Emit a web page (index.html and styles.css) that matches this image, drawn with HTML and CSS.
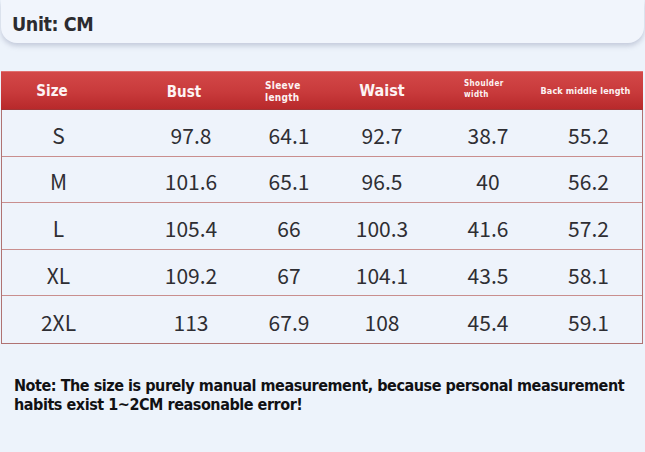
FILE: index.html
```html
<!DOCTYPE html>
<html>
<head>
<meta charset="utf-8">
<link rel="stylesheet" href="styles.css">
</head>
<body>
<div class="page">
  <div class="unit-card"><span class="unit">Unit: CM</span></div>
  <div class="table">
    <div class="row head">
      <div class="c c1 h-size">Size</div>
      <div class="c c2 h-bust">Bust</div>
      <div class="c c3 h-sleeve">Sleeve<br>length</div>
      <div class="c c4 h-waist">Waist</div>
      <div class="c c5 h-shoulder">Shoulder<br>width</div>
      <div class="c c6 h-back">Back middle length</div>
    </div>
    <div class="row"><div class="c c1">S</div><div class="c c2">97.8</div><div class="c c3">64.1</div><div class="c c4">92.7</div><div class="c c5">38.7</div><div class="c c6">55.2</div></div>
    <div class="row"><div class="c c1">M</div><div class="c c2">101.6</div><div class="c c3">65.1</div><div class="c c4">96.5</div><div class="c c5">40</div><div class="c c6">56.2</div></div>
    <div class="row"><div class="c c1">L</div><div class="c c2">105.4</div><div class="c c3">66</div><div class="c c4">100.3</div><div class="c c5">41.6</div><div class="c c6">57.2</div></div>
    <div class="row"><div class="c c1">XL</div><div class="c c2">109.2</div><div class="c c3">67</div><div class="c c4">104.1</div><div class="c c5">43.5</div><div class="c c6">58.1</div></div>
    <div class="row last"><div class="c c1">2XL</div><div class="c c2">113</div><div class="c c3">67.9</div><div class="c c4">108</div><div class="c c5">45.4</div><div class="c c6">59.1</div></div>
  </div>
  <p class="note">Note: The size is purely manual measurement, because personal measurement<br>habits exist 1~2CM reasonable error!</p>
</div>
</body>
</html>
```
FILE: styles.css
```css
html, body {
  margin: 0;
  padding: 0;
  background: #edf3fb;
  width: 645px;
  height: 452px;
  overflow: hidden;
}
.page {
  display: flex;
  flex-direction: column;
}
.unit-card {
  height: 43px;
  background: #f1f5fc;
  border-radius: 0 0 16px 16px;
  box-shadow: 0 3px 5px rgba(120, 130, 160, 0.35);
  display: flex;
  align-items: center;
  padding: 0 0 0 11px;
  margin: 0 1px;
}
.unit {
  font-family: "DejaVu Sans Condensed", "Open Sans", sans-serif;
  font-stretch: condensed;
  font-weight: 700;
  font-size: 19.5px;
  color: #2b2b2f;
  letter-spacing: -0.4px;
  margin-top: 5px;
}
.table {
  margin: 28px 0 0 1px;
  width: 642px;
  border: 1px solid #b07272;
  border-top: none;
  box-sizing: border-box;
}
.row {
  display: grid;
  grid-template-columns: 113px 152px 44px 142px 70px 119px;
  height: 46.6px;
  border-bottom: 1px solid #c98e8e;
  box-sizing: border-box;
  background: #eef3fb;
}
.row.last { border-bottom: none; }
.c {
  display: flex;
  align-items: center;
  justify-content: center;
  font-family: "Noto Sans CJK SC", "Noto Sans", sans-serif;
  font-size: 21px;
  color: #2e2e33;
  padding-top: 4px;
  white-space: nowrap;
}
.c6 { padding-left: 12px; }
.row.head {
  height: 39px;
  background: linear-gradient(#d34848 0%, #c83a3b 55%, #b8292b 100%);
  border-top: 1px solid #e07070;
  border-bottom: 1px solid #a23436;
  margin: 0 -1px;
  grid-template-columns: 114px 152px 44px 142px 70px 121px;
}
.row.head .c {
  font-family: "DejaVu Sans Condensed", "Open Sans", sans-serif;
  font-stretch: condensed;
  font-weight: 700;
  color: #fdf3f3;
  padding-top: 0;
}
.h-size { font-size: 15px; padding-right: 12px; }
.h-bust { font-size: 15px; padding-right: 14px; padding-top: 3px !important; }
.h-sleeve {
  font-size: 10px;
  line-height: 12px;
  letter-spacing: 0.3px;
  justify-content: flex-start !important;
  text-align: left;
  padding-left: 0;
  margin-left: -2px;
  padding-top: 3px !important;
}
.h-waist { font-size: 16px; }
.h-shoulder {
  font-size: 8px;
  line-height: 11px;
  letter-spacing: 0.4px;
  justify-content: flex-start !important;
  text-align: left;
  padding-left: 11px;
  padding-bottom: 4px;
}
.h-back {
  font-size: 9px;
  letter-spacing: 0.1px;
  padding-left: 4px !important;
}
.note {
  margin: 32px 0 0 14px;
  font-family: "DejaVu Sans Condensed", "Open Sans", sans-serif;
  font-stretch: condensed;
  font-weight: 700;
  font-size: 16px;
  line-height: 19px;
  color: #111114;
  letter-spacing: -0.45px;
}
```
